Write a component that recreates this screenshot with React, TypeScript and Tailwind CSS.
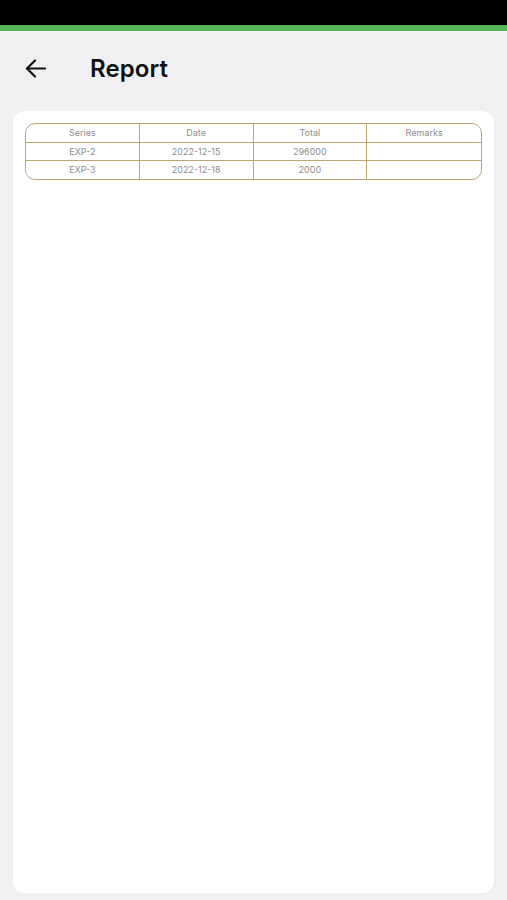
import React from "react";

const rows = [
  ["EXP-2", "2022-12-15", "296000", ""],
  ["EXP-3", "2022-12-18", "2000", ""],
];

export default function App() {
  return (
    <div className="w-[507px] h-[900px] bg-[#f0f0f2] flex flex-col" style={{ fontFamily: "Inter, 'Noto Sans', sans-serif" }}>
      <div className="h-[25px] bg-black shrink-0" />
      <div className="h-[6px] bg-[#57b65a] shrink-0" />
      <div className="h-[74px] flex items-center shrink-0 pl-[25px] pt-[1px]">
        <svg width="21" height="19" viewBox="0 0 21 19" fill="none" stroke="#111" strokeWidth="2.2" strokeLinecap="round" strokeLinejoin="round">
          <path d="M20 9.5H2" />
          <path d="M10 1.5L2 9.5L10 17.5" />
        </svg>
        <div className="ml-[44px] text-[24px] font-semibold text-[#111] leading-none tracking-[0.1px]">Report</div>
      </div>
      <div className="mx-[13px] mt-[6px] mb-[7px] flex-1 bg-white rounded-[12px] pt-[12px] px-[12px]">
        <div className="border-[1.5px] border-[#bfa574] rounded-[10px] overflow-hidden">
          <div className="grid grid-cols-4 h-[19px] border-b-[1.5px] border-[#bfa574]">
            {["Series", "Date", "Total", "Remarks"].map((h, i) => (
              <div key={h} className={`flex items-center justify-center text-[9px] text-[#8c8c8c] ${i < 3 ? "border-r-[1.5px] border-[#bfa574]" : ""}`}>{h}</div>
            ))}
          </div>
          {rows.map((r, ri) => (
            <div key={ri} className={`grid grid-cols-4 h-[18px] ${ri === 0 ? "border-b-[1.5px] border-[#bfa574]" : ""}`}>
              {r.map((c, i) => (
                <div key={i} className={`flex items-center justify-center text-[9px] text-[#8c8c8c] ${i < 3 ? "border-r-[1.5px] border-[#bfa574]" : ""}`}>{c}</div>
              ))}
            </div>
          ))}
        </div>
      </div>
    </div>
  );
}
